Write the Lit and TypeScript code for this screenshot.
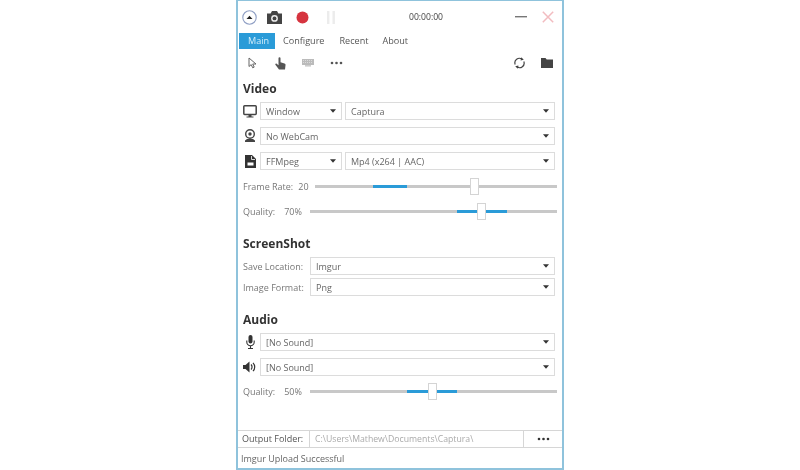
import { LitElement, html, css, svg } from "lit";
import { customElement } from "lit/decorators.js";

const caret = html`<svg class="caret" width="6" height="4" viewBox="0 0 6 4"><path d="M0 .3h6L3 3.800z" fill="#333"/></svg>`;

function combo(text: string, cls = "") {
  return html`<div class="combo ${cls}"><span>${text}</span>${caret}</div>`;
}

function slider(left: number, start: number, end: number, thumb: number) {
  return html`<div class="slider" style="margin-left:${left}px">
    <div class="fill" style="left:${start}px;width:${end - start}px"></div>
    <div class="thumb" style="left:${thumb}px"></div>
  </div>`;
}

function icon(w: number, h: number, body: unknown, vb = `0 0 ${w} ${h}`) {
  return html`<svg width=${w} height=${h} viewBox=${vb}>${body}</svg>`;
}

@customElement("app-root")
export class AppRoot extends LitElement {
  static styles = css`
    :host { display: block; width: 800px; height: 470px; background: #fff; overflow: hidden; }
    * { box-sizing: border-box; }
    .win {
      width: 328px; height: 470px; margin: 0 auto; background: #fff;
      border: 2px solid #8fc3dc; border-top-width: 1px;
      font: 9px "Open Sans", "Noto Sans", sans-serif; color: #555;
      display: flex; flex-direction: column; filter: blur(0.4px);
    }
    .title { height: 32px; display: flex; align-items: center; padding: 0 8px 0 4px; flex: none; }
    .title .ic { display: flex; align-items: center; justify-content: center; }
    .time { flex: 1; text-align: center; color: #444; font-size: 8.600px; padding-left: 2px; }
    .tabs { display: flex; height: 16px; flex: none; margin-left: 1px; align-items: center; }
    .tab { padding: 0 7px; height: 16px; line-height: 16px; margin-right: 1px; font-size: 9.100px; color: #555; white-space: nowrap; }
    .tab.on { background: #2a9bd8; color: #d4eefb; width: 36px; margin-right: 1px; padding: 0 0 0 9px; }
    .tab.tight { margin-right: 0; }
    .tools { height: 28px; flex: none; display: flex; align-items: center; padding: 0 9px 0 10px; }
    .tools .sp { flex: 1; }
    .h { font-weight: 700; font-size: 12px; color: #333; height: 16px; line-height: 18px; margin-left: 5px; }
    .row { display: flex; align-items: center; height: 18px; padding-left: 5px; padding-right: 7px; gap: 3px; }
    .row .ico { width: 14px; display: flex; justify-content: center; flex: none; }
    .combo {
      height: 18px; flex: 1; min-width: 0; border: 1px solid #dcdcdc; background: #fff;
      display: flex; align-items: center; justify-content: space-between;
      padding: 0 5px; font-size: 9px; color: #666; white-space: nowrap;
    }
    .combo.w { flex: none; width: 82px; }
    .lbl { color: #777; font-size: 9px; white-space: nowrap; }
    .lbl.fx { width: 64px; flex: none; }
    .val { color: #777; font-size: 9px; white-space: nowrap; }
    .srow { display: flex; align-items: center; height: 18px; padding: 0 5px; }
    .slider { position: relative; flex: 1; height: 3px; background: #c8c8c8; }
    .fill { position: absolute; top: 0; height: 3px; background: #2a9bd8; }
    .thumb { position: absolute; top: -7px; width: 9px; height: 17px; background: #fff; border: 1px solid #d4d4d4; }
    .grow { flex: 1; }
    .out { height: 18px; flex: none; display: flex; border-top: 1px solid #d6d6d6; border-bottom: 1px solid #d6d6d6; align-items: stretch; }
    .out .ol { width: 72px; padding-left: 4px; color: #555; line-height: 16px; border-right: 1px solid #d6d6d6; font-size: 9px; }
    .out .op { flex: 1; padding-left: 5px; line-height: 16px; color: #aaa; font-size: 8.700px; border-right: 1px solid #d6d6d6; white-space: nowrap; }
    .out .ob { width: 38px; display: flex; align-items: center; justify-content: center; }
    .status { height: 20px; flex: none; line-height: 22px; padding-left: 3px; font-size: 9px; color: #666; }
  `;

  render() {
    const dots = (c: string) => icon(13, 4, svg`<circle cx="2" cy="2" r="1.300" fill=${c}/><circle cx="6.500" cy="2" r="1.300" fill=${c}/><circle cx="11" cy="2" r="1.300" fill=${c}/>`);
    return html`<div class="win">
      <div class="title">
        <div class="ic" style="width:15px">${icon(15, 15, svg`<circle cx="7.500" cy="7.500" r="6.700" fill="#fff" stroke="#8f9fc4" stroke-width="1.100"/><path d="M4.500 9 7.500 5.800 10.500 9z" fill="#222"/>`)}</div>
        <div class="ic" style="margin-left:10px">${icon(15, 13, svg`<path d="M0 2.500h3.600L5 0h5l1.400 2.500H15V13H0z" fill="#444"/><circle cx="7.500" cy="7.400" r="3.400" fill="#eee"/><circle cx="7.500" cy="7.400" r="1.900" fill="#444"/>`)}</div>
        <div class="ic" style="margin-left:14px">${icon(13, 13, svg`<circle cx="6.500" cy="6.500" r="6" fill="#d6343f"/>`)}</div>
        <div class="ic" style="margin-left:17px">${icon(10, 13, svg`<rect x="1" y="0" width="2.400" height="13" fill="#ececec"/><rect x="6.500" y="0" width="2.400" height="13" fill="#ececec"/>`)}</div>
        <div class="time">00:00:00</div>
        <div class="ic" style="width:13px;margin-right:15px">${icon(12, 2, svg`<rect width="12" height="1.400" fill="#777"/>`)}</div>
        <div class="ic">${icon(12, 12, svg`<path d="M.8.8l10.400 10.400M11.200.8.8 11.200" stroke="#f2bcc0" stroke-width="1.500" fill="none"/>`)}</div>
      </div>
      <div class="tabs">
        <div class="tab on">Main</div>
        <div class="tab">Configure</div>
        <div class="tab tight">Recent</div>
        <div class="tab">About</div>
      </div>
      <div class="tools">
        ${icon(9, 12, svg`<path d="M1 1v8.500l2.200-1.900 1.500 3.200 1.500-.7-1.500-3.100H8z" fill="#fff" stroke="#666" stroke-width="1"/>`)}
        <div style="margin-left:18px;display:flex">${icon(11, 13, svg`<path d="M3.500 1.200a1 1 0 0 1 2 0v4l4 1.200c.8.300 1.200 1 1 1.800L10 12.500H4L.4 7.800c-.5-.8.600-1.600 1.300-1l1.800 1.400z" fill="#555"/>`)}</div>
        <div style="margin-left:16px;display:flex">${icon(12, 8, svg`<rect width="12" height="6" y="0" fill="#bbb"/><path d="M1 1.500h10M1 3.500h10" stroke="#e8e8e8" stroke-width=".7" stroke-dasharray="1 1"/><rect x="3" y="6" width="6" height="1.600" fill="#ccc"/>`)}</div>
        <div style="margin-left:16px;display:flex">${dots("#555")}</div>
        <div class="sp"></div>
        ${icon(11, 12, svg`<path d="M1.200 7.500A4.500 4.500 0 0 1 8 2.200M9.800 4.500A4.500 4.500 0 0 1 3 9.800" stroke="#444" stroke-width="1.200" fill="none"/><path d="M7.200.2 9.800 2.800 6.600 3.600zM3.800 11.800 1.200 9.200 4.400 8.400z" fill="#444"/>`)}
        <div style="margin-left:16px;display:flex">${icon(12, 10, svg`<path d="M0 0h4.500l1.200 1.500H12V10H0z" fill="#444"/>`)}</div>
      </div>
      <div class="h" style="margin-top:3px">Video</div>
      <div class="row" style="margin-top:6px">
        <div class="ico">${icon(14, 13, svg`<rect x=".8" y=".8" width="12.400" height="8.600" rx=".8" fill="#fff" stroke="#444" stroke-width="1.500"/><path d="M5.500 10h3v1.600h2v1H3.500v-1h2z" fill="#444"/>`)}</div>
        ${combo("Window", "w")}${combo("Captura")}
      </div>
      <div class="row" style="margin-top:7px">
        <div class="ico">${icon(12, 14, svg`<circle cx="6" cy="5" r="4.300" fill="none" stroke="#444" stroke-width="1.400"/><circle cx="6" cy="5" r="1.700" fill="#444"/><path d="M1 13v-1.500l2-1.500h6l2 1.500V13z" fill="#444"/>`)}</div>
        ${combo("No WebCam")}
      </div>
      <div class="row" style="margin-top:7px">
        <div class="ico">${icon(11, 13, svg`<path d="M0 0h7l4 4v9H0z" fill="#333"/><rect x="2.500" y="7.500" width="6" height="3" fill="#fff"/><path d="M6.500 1v3.500h3.500" fill="none" stroke="#fff" stroke-width=".8"/>`)}</div>
        ${combo("FFMpeg", "w")}${combo("Mp4 (x264 | AAC)")}
      </div>
      <div class="srow" style="margin-top:7px">
        <span class="lbl">Frame Rate:</span><span class="val" style="margin-left:5px">20</span>
        ${slider(6, 58, 92, 155)}
      </div>
      <div class="srow" style="margin-top:7px">
        <span class="lbl">Quality:</span><span class="val" style="margin-left:9px">70%</span>
        ${slider(8, 147, 197, 167)}
      </div>
      <div class="h" style="margin-top:15px">ScreenShot</div>
      <div class="row" style="margin-top:6px">
        <span class="lbl fx">Save Location:</span>${combo("Imgur")}
      </div>
      <div class="row" style="margin-top:3px">
        <span class="lbl fx">Image Format:</span>${combo("Png")}
      </div>
      <div class="h" style="margin-top:15px">Audio</div>
      <div class="row" style="margin-top:6px">
        <div class="ico">${icon(9, 14, svg`<rect x="2.500" y="0" width="4" height="8.500" rx="2" fill="#333"/><path d="M.8 5.500v1.500a3.700 3.700 0 0 0 7.400 0V5.500M4.500 11v2.500M2 13.500h5" fill="none" stroke="#333" stroke-width="1.100"/>`)}</div>
        ${combo("[No Sound]")}
      </div>
      <div class="row" style="margin-top:7px">
        <div class="ico">${icon(14, 12, svg`<path d="M0 4h2.500L6.500.5v11L2.500 8H0z" fill="#333"/><path d="M8 3.500a3.500 3.500 0 0 1 0 5M10 1.800a6 6 0 0 1 0 8.400" fill="none" stroke="#333" stroke-width="1.200"/>`)}</div>
        ${combo("[No Sound]")}
      </div>
      <div class="srow" style="margin-top:6px">
        <span class="lbl">Quality:</span><span class="val" style="margin-left:9px">50%</span>
        ${slider(8, 97, 147, 118)}
      </div>
      <div class="grow"></div>
      <div class="out">
        <div class="ol">Output Folder:</div>
        <div class="op">C:\\Users\\Mathew\\Documents\\Captura\\</div>
        <div class="ob">${dots("#333")}</div>
      </div>
      <div class="status">Imgur Upload Successful</div>
    </div>`;
  }
}
